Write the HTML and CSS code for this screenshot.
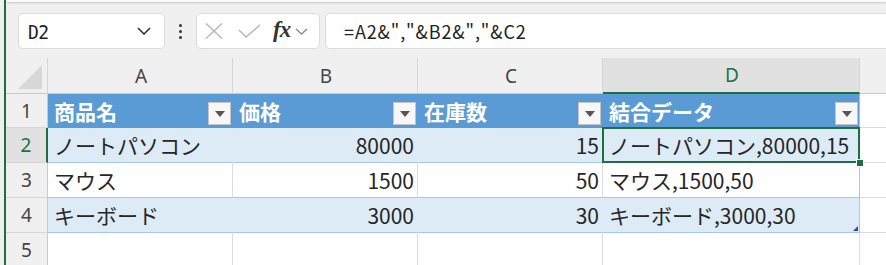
FILE: index.html
```html
<!DOCTYPE html>
<html lang="ja">
<head>
<meta charset="utf-8">
<link rel="stylesheet" href="styles.css">
</head>
<body>
<div class="app">
  <div class="toolbar">
    <div class="ribbon-edge"></div>
    <div class="bar">
      <div class="namebox">
        <span class="name">D2</span>
        <svg class="chev" width="14" height="8" viewBox="0 0 14 8"><path d="M1 1 L7 7 L13 1" fill="none" stroke="#333" stroke-width="1.6"/></svg>
      </div>
      <div class="dots"><i></i><i></i><i></i></div>
      <div class="fxbox">
        <svg class="ico-x" width="18" height="16" viewBox="0 0 18 16"><path d="M1 0.5 L17 15.5 M17 0.5 L1 15.5" fill="none" stroke="#b8b8b8" stroke-width="1.5"/></svg>
        <svg class="ico-ok" width="23" height="14" viewBox="0 0 23 14"><path d="M1 6 L8 13 L22 1" fill="none" stroke="#b8b8b8" stroke-width="1.5"/></svg>
        <span class="fx">fx</span>
        <svg class="chev-s" width="13" height="7" viewBox="0 0 13 7"><path d="M1 1 L6.5 6 L12 1" fill="none" stroke="#8a8a8a" stroke-width="1.3"/></svg>
      </div>
      <div class="formula">=A2&amp;","&amp;B2&amp;","&amp;C2</div>
    </div>
  </div>
  <div class="sheet">
    <!-- column header row -->
    <div class="c hd corner"><svg width="24" height="24" viewBox="0 0 24 24"><polygon points="24,0 24,24 0,24" fill="#d7d7d7"/></svg></div>
    <div class="c hd col">A</div>
    <div class="c hd col">B</div>
    <div class="c hd col">C</div>
    <div class="c hd col sel-col">D</div>
    <div class="c hd col blank"></div>

    <!-- row 1 -->
    <div class="c rh">1</div>
    <div class="c th"><span>商品名</span><b class="dd"></b></div>
    <div class="c th"><span>価格</span><b class="dd"></b></div>
    <div class="c th"><span>在庫数</span><b class="dd"></b></div>
    <div class="c th last"><span>結合データ</span><b class="dd"></b></div>
    <div class="c e"></div>

    <!-- row 2 -->
    <div class="c rh sel-row">2</div>
    <div class="c band">ノートパソコン</div>
    <div class="c band num">80000</div>
    <div class="c band num">15</div>
    <div class="c band last active">ノートパソコン,80000,15<b class="handle"></b></div>
    <div class="c e"></div>

    <!-- row 3 -->
    <div class="c rh">3</div>
    <div class="c plain">マウス</div>
    <div class="c plain num">1500</div>
    <div class="c plain num">50</div>
    <div class="c plain last">マウス,1500,50</div>
    <div class="c e"></div>

    <!-- row 4 -->
    <div class="c rh">4</div>
    <div class="c band">キーボード</div>
    <div class="c band num">3000</div>
    <div class="c band num">30</div>
    <div class="c band last resize">キーボード,3000,30</div>
    <div class="c e"></div>

    <!-- row 5 -->
    <div class="c rh">5</div>
    <div class="c g"></div>
    <div class="c g"></div>
    <div class="c g"></div>
    <div class="c g"></div>
    <div class="c e"></div>
  </div>
</div>
</body>
</html>
```

FILE: styles.css
```css
* { box-sizing: border-box; }
html, body { margin: 0; padding: 0; }
body {
  background: #efefef;
  width: 886px;
  height: 265px;
  overflow: hidden;
  font-family: "Noto Sans CJK JP", "Noto Sans", sans-serif;
}
.app {
  margin-left: 4px;
  border-left: 2px solid #1f6e40;
  height: 265px;
  background: #efefef;
}
.toolbar {
  height: 58px;
  background: #f0f0f0;
  position: relative;
}
.ribbon-edge {
  height: 2px;
  margin-left: 1px;
  background: #fbfbfb;
  box-shadow: 0 1px 2px rgba(0,0,0,0.18);
}
.bar {
  display: flex;
  align-items: center;
  padding-top: 10px;
  padding-left: 12px;
  height: 48px;
}
.namebox {
  width: 147px;
  height: 36px;
  background: #fff;
  border: 1px solid #dcdcdc;
  border-radius: 5px;
  display: flex;
  align-items: center;
  justify-content: space-between;
  padding: 0 13px 0 9px;
}
.name {
  font-family: "DejaVu Sans Mono", monospace;
  font-size: 18px;
  color: #222;
  letter-spacing: -0.5px;
  transform: scaleY(1.1);
}
.dots {
  width: 31px;
  display: flex;
  flex-direction: column;
  align-items: center;
  gap: 3px;
}
.dots i {
  display: block;
  width: 3px;
  height: 3px;
  border-radius: 50%;
  background: #333;
}
.fxbox {
  width: 124px;
  height: 36px;
  background: #fff;
  border: 1px solid #dcdcdc;
  border-radius: 5px;
  display: flex;
  align-items: center;
  padding-left: 8px;
}
.ico-x { margin-right: 15px; }
.ico-ok { margin-right: 12px; margin-top: -1px; }
.fx {
  font-family: "Liberation Serif", serif;
  font-style: italic;
  font-weight: bold;
  font-size: 23px;
  color: #333;
  letter-spacing: -1px;
  margin-right: 5px;
  margin-top: -3px;
}
.formula {
  margin-left: 5px;
  flex: 1;
  height: 36px;
  background: #fff;
  border: 1px solid #dcdcdc;
  border-right: none;
  border-radius: 5px 0 0 5px;
  display: flex;
  align-items: center;
  padding-left: 18px;
  font-size: 18px;
  letter-spacing: 0.9px;
  color: #222;
}

.sheet {
  display: grid;
  grid-template-columns: 42px 185px 185px 185px 257px 1fr;
  grid-template-rows: 36px 34px 35px 35px 35px 35px;
  background: #fff;
}
.c {
  border-right: 1px solid #dcdcdc;
  border-bottom: 1px solid #dcdcdc;
  display: flex;
  align-items: center;
  font-size: 21px;
  color: #262626;
  padding: 0 4px 0 6px;
  white-space: nowrap;
  position: relative;
}
.hd {
  background: #f0f0f0;
  border-right-color: #d6d6d6;
  border-bottom-color: #c9c9c9;
  justify-content: center;
  font-family: "Noto Sans", sans-serif;
  font-size: 19px;
  color: #444;
}
.corner {
  padding: 0;
  align-items: flex-start;
  justify-content: flex-start;
}
.corner svg { margin: 7px 0 0 12px; }
.hd.blank { background: #f0f0f0; border-right: none; }
.sel-col {
  background: #e1e1e1;
  color: #1b7345;
  border-bottom: 2px solid #1f6e40;
}
.rh {
  background: #f0f0f0;
  border-right-color: #c9c9c9;
  border-bottom-color: #d6d6d6;
  justify-content: center;
  font-family: "Noto Sans", sans-serif;
  font-size: 19px;
  color: #444;
  padding: 0;
}
.sel-row {
  background: #e1e1e1;
  color: #1b7345;
  border-right: 2px solid #1f6e40;
}
.th {
  background: #5b9bd5;
  border-right-color: #5b9bd5;
  border-bottom-color: #5b9bd5;
  color: #fff;
  font-weight: bold;
  justify-content: space-between;
  padding-right: 1px;
}
.th.last { border-right-color: #9bc2e6; }
.dd {
  width: 23px;
  height: 23px;
  background: #f7f7f7;
  border: 1px solid #c4c4c4;
  align-self: flex-end;
  margin-bottom: 2px;
  display: flex;
  align-items: center;
  justify-content: center;
}
.dd::after {
  content: "";
  width: 0;
  height: 0;
  border-left: 5px solid transparent;
  border-right: 5px solid transparent;
  border-top: 6px solid #555;
  margin-top: 1px;
}
.band {
  background: #ddebf7;
  border-right-color: #ddebf7;
  border-bottom-color: #a6c8ea;
}
.plain {
  border-bottom-color: #a6c8ea;
}
.last { border-right-color: #a6c8ea; }
.num { justify-content: flex-end; padding-right: 3px; }
.e { border-right: none; }
.active::after {
  content: "";
  position: absolute;
  left: -1px;
  top: -1px;
  right: -1px;
  bottom: -1px;
  border: 2px solid #1f6e40;
}
.handle {
  position: absolute;
  right: -5px;
  bottom: -5px;
  width: 8px;
  height: 8px;
  background: #1f6e40;
  border: 1px solid #fff;
  z-index: 2;
}
.resize::after {
  content: "";
  position: absolute;
  right: 1px;
  bottom: 1px;
  width: 0;
  height: 0;
  border-left: 5px solid transparent;
  border-bottom: 5px solid #2f4aa8;
}
```
